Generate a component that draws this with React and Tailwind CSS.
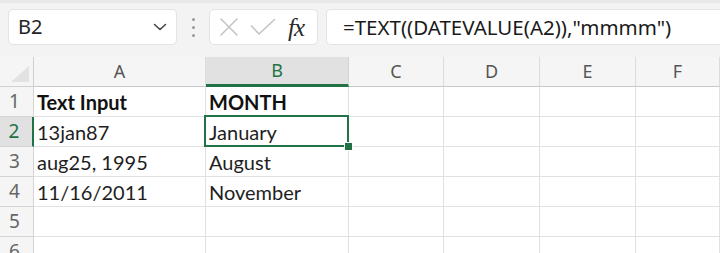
import React from "react";

const cols = ["A", "B", "C", "D", "E", "F"];
const rows = [
  ["Text Input", "MONTH"],
  ["13jan87", "January"],
  ["aug25, 1995", "August"],
  ["11/16/2011", "November"],
  ["", ""],
  ["", ""],
];

function Chevron() {
  return (
    <svg width="14" height="8" viewBox="0 0 14 8" fill="none" stroke="#444" strokeWidth="1.6" strokeLinecap="round" strokeLinejoin="round">
      <path d="M1.5 1.5 L7 6.5 L12.5 1.5" />
    </svg>
  );
}

function XIcon() {
  return (
    <svg width="20" height="20" viewBox="0 0 20 20" fill="none" stroke="#c4c4c4" strokeWidth="1.6" strokeLinecap="round">
      <path d="M2 2 L18 18 M18 2 L2 18" />
    </svg>
  );
}

function CheckIcon() {
  return (
    <svg width="26" height="18" viewBox="0 0 26 18" fill="none" stroke="#c4c4c4" strokeWidth="1.6" strokeLinecap="round" strokeLinejoin="round">
      <path d="M1.5 8 L9 16 L24.5 1.5" />
    </svg>
  );
}

export default function App() {
  return (
    <div className="w-[720px] h-[253px] overflow-hidden bg-white">
      {/* toolbar */}
      <div className="h-[57px] bg-[#f3f3f3] border-t-[3px] border-[#e8e8e8] flex items-start pt-[6px] pl-[8px]">
        <div className="w-[169px] h-[36px] bg-white rounded-[5px] border border-[#e3e3e3] flex items-center justify-between pl-[9px] pr-[9px]">
          <span className="text-[20px] text-[#242424] font-['Noto_Sans',sans-serif] leading-none">B2</span>
          <Chevron />
        </div>
        <div className="w-[32px] h-[36px] flex flex-col items-center justify-center gap-[5px]">
          <span className="w-[3px] h-[3px] rounded-full bg-[#9a9a9a]"></span>
          <span className="w-[3px] h-[3px] rounded-full bg-[#9a9a9a]"></span>
          <span className="w-[3px] h-[3px] rounded-full bg-[#9a9a9a]"></span>
        </div>
        <div className="w-[109px] h-[36px] bg-white rounded-[5px] border border-[#e3e3e3] flex items-center pl-[9px]">
          <XIcon />
          <span className="ml-[11px]"><CheckIcon /></span>
          <span className="ml-[12px] text-[25px] italic text-[#2a2a2a] font-['Liberation_Serif',serif] leading-none tracking-[-1px]">fx</span>
        </div>
        <div className="ml-[8px] flex-1 h-[36px] bg-white rounded-l-[5px] border border-r-0 border-[#e3e3e3] flex items-center pl-[16px]">
          <span className="text-[20.5px] text-[#1a1a1a] font-['Noto_Sans',sans-serif] leading-none whitespace-nowrap">=TEXT((DATEVALUE(A2)),"mmmm")</span>
        </div>
      </div>

      {/* grid */}
      <div className="grid grid-cols-[34px_172px_143px_95px_96px_96px_1fr] grid-rows-[30px_30px_30px_30px_30px_30px_30px] font-['Lato',sans-serif]">
        {/* header row */}
        <div className="bg-[#f5f5f5] border-r border-b border-[#d0d0d0] relative">
          <svg className="absolute right-[4px] bottom-[4px]" width="18" height="16" viewBox="0 0 18 16">
            <path d="M18 0 L18 16 L0 16 Z" fill="#e2e2e2" />
          </svg>
        </div>
        {cols.map((c, i) =>
          c === "B" ? (
            <div key={i} className="bg-[#e1e1e1] border-r border-[#d4d4d4] border-b-[3px] border-b-[#217346] flex items-center justify-center text-[18px] text-[#217346] font-['Noto_Sans',sans-serif]">
              {c}
            </div>
          ) : (
            <div key={i} className="bg-[#f5f5f5] border-r border-b border-r-[#dcdcdc] border-b-[#c8c8c8] flex items-center justify-center text-[18px] text-[#555] font-['Noto_Sans',sans-serif]">
              {c}
            </div>
          )
        )}
        {rows.map((r, ri) => (
          <React.Fragment key={ri}>
            <div
              className={
                ri === 1
                  ? "bg-[#e1e1e1] border-r-2 border-r-[#217346] border-b border-b-[#d4d4d4] flex items-center justify-center text-[19px] text-[#217346] font-['Noto_Sans',sans-serif] pr-[4px]"
                  : "bg-[#f5f5f5] border-r border-b border-[#d4d4d4] flex items-center justify-center text-[19px] text-[#666] font-['Noto_Sans',sans-serif] pr-[4px]"
              }
            >
              {ri + 1}
            </div>
            {cols.map((c, ci) => {
              const val = ci < 2 ? r[ci] : "";
              const bold = ri === 0;
              const selected = ri === 1 && ci === 1;
              return (
                <div key={ci} className={"border-r border-b border-[#e1e1e1] flex items-end pb-[2px] pl-[3px] relative" + (selected ? " z-10" : "")}>
                  <span className={(bold ? "font-bold text-[#111] " : "text-[#1e1e1e] ") + "text-[20px] leading-[24px] whitespace-nowrap"}>
                    {val}
                  </span>
                  {selected && (
                    <>
                      <div className="absolute -left-[2px] -top-[2px] -right-[1px] -bottom-[1px] border-2 border-[#217346]"></div>
                      <div className="absolute -right-[5px] -bottom-[5px] w-[9px] h-[9px] bg-[#217346] border border-white"></div>
                    </>
                  )}
                </div>
              );
            })}
          </React.Fragment>
        ))}
      </div>
    </div>
  );
}
